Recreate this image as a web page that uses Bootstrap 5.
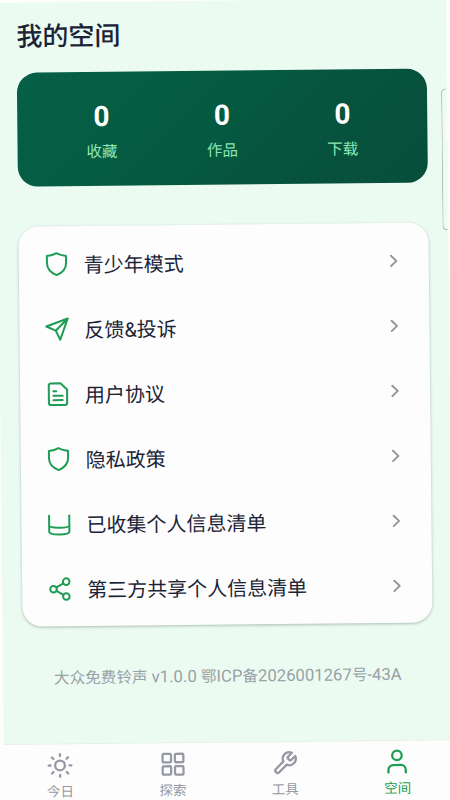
<!DOCTYPE html>
<html lang="zh-CN">
<head>
<meta charset="utf-8">
<meta name="viewport" content="width=device-width, initial-scale=1">
<title>我的空间</title>
<link rel="stylesheet" href="https://cdn.jsdelivr.net/npm/bootstrap@5.3.0/dist/css/bootstrap.min.css">
<style>
html, body { height: 100%; overflow: hidden; background: #fdfdfd; }
body { font-family: Roboto, "Noto Sans CJK SC", sans-serif; color: #1b2436; }
/* Whole screen sits slightly tilted */
.screen { width: 449.5px; height: 797px; margin: 3px 0 0 -4px; background: #ecfbf2; transform: rotate(-.6deg); transform-origin: 4px -3px; }
.screen-main { height: 740.7px; padding: 13.5px 19.6px 0; }
.page-title { font-size: 26px; line-height: 40px; font-weight: 500; margin: 0 0 16.3px .5px; color: #1b2436; }
.stats { height: 114.3px; border-radius: 20px; padding: 28.5px 24.5px 0; background: linear-gradient(135deg, #066046, #045a40 50%, #07543e 62%, #064e3b); }
.stat-num { font-size: 28px; line-height: 34px; font-weight: 700; color: #fff; }
.stat-label { font-size: 15.5px; line-height: 22px; margin-top: 6.5px; color: #8be8b4; }
.menu { margin-top: 39.8px; height: 400px; border-radius: 20px; padding: 5px 0; background: #fdfdfd; box-shadow: 0 1px 3px rgba(30,60,45,.32); }
.menu-item { height: 65px; padding: 0 27px 0 25.5px; font-size: 20px; color: #1b2436; text-decoration: none; }
.menu-item span { padding-top: 3px; }
.glyph { fill: none; stroke: currentColor; stroke-width: 1.9; stroke-linecap: round; stroke-linejoin: round; flex: none; display: block; }
.lead-glyph { width: 25.5px; height: 25.5px; margin-right: 14.3px; color: #1f9d55; }
.chev { width: 16px; height: 16px; color: #92959d; margin-top: 1.5px; }
.version { font-size: 15.6px; line-height: 24px; margin-top: 40.5px; color: #98a1a6; white-space: nowrap; }
.version span { font-size: 16.7px; }
.tabs { height: 56.3px; background: #fdfdfd; border-top: 1px solid #e3f1e8; }
.tab { padding-top: 8px; font-size: 13.5px; line-height: 16px; color: #9699a3; text-decoration: none; }
.tab .glyph { width: 26px; height: 26px; stroke-width: 2.1; margin-bottom: 5.5px; }
.tab.current { color: #1f9d55; }
.edge-handle { left: 444.2px; top: 90.2px; width: 12px; height: 142px; border: 1px solid #a5afaa; border-right: 0; border-radius: 5px 0 0 5px; background: linear-gradient(90deg, #eefaf3 0 4px, #fdfdfd 4px); clip-path: inset(0 7px 0 0); }
</style>
</head>
<body>
<div class="screen position-relative">
  <main class="screen-main">
    <h1 class="page-title">我的空间</h1>
    <section class="stats d-flex text-center">
      <div class="flex-fill w-100"><div class="stat-num">0</div><div class="stat-label">收藏</div></div>
      <div class="flex-fill w-100"><div class="stat-num">0</div><div class="stat-label">作品</div></div>
      <div class="flex-fill w-100"><div class="stat-num">0</div><div class="stat-label">下载</div></div>
    </section>
    <nav class="menu d-flex flex-column">
      <a class="menu-item d-flex align-items-center" href="#"><svg class="glyph lead-glyph" viewBox="0 0 24 24"><path d="M12 1.700C9.500 3.200 6.500 4 3 4.300V11c0 5 3.500 8.900 9 11.300 5.500-2.400 9-6.300 9-11.300V4.300C17.500 4 14.500 3.200 12 1.700z"/></svg><span>青少年模式</span><svg class="glyph chev ms-auto" viewBox="0 0 16 16"><path d="M5.200 2.800 10.600 8l-5.400 5.200"/></svg></a>
      <a class="menu-item d-flex align-items-center" href="#"><svg class="glyph lead-glyph" viewBox="0 0 24 24"><path d="M22 2 1.800 9.400l8.800 4L14.800 22zM22 2 10.600 13.400"/></svg><span>反馈&amp;投诉</span><svg class="glyph chev ms-auto" viewBox="0 0 16 16"><path d="M5.200 2.800 10.600 8l-5.400 5.200"/></svg></a>
      <a class="menu-item d-flex align-items-center" href="#"><svg class="glyph lead-glyph" viewBox="0 0 24 24"><path d="M5.500 1.800h9L20.700 7.800v12.400a2 2 0 0 1-2 2H5.500a2 2 0 0 1-2-2V3.800a2 2 0 0 1 2-2zM7.800 9.300h2.700M7.800 13.500h8.700M7.800 17.600h8.700"/></svg><span>用户协议</span><svg class="glyph chev ms-auto" viewBox="0 0 16 16"><path d="M5.200 2.800 10.600 8l-5.400 5.200"/></svg></a>
      <a class="menu-item d-flex align-items-center" href="#"><svg class="glyph lead-glyph" viewBox="0 0 24 24"><path d="M12 1.700C9.500 3.200 6.500 4 3 4.300V11c0 5 3.500 8.900 9 11.300 5.500-2.400 9-6.300 9-11.300V4.300C17.500 4 14.500 3.200 12 1.700z"/></svg><span>隐私政策</span><svg class="glyph chev ms-auto" viewBox="0 0 16 16"><path d="M5.200 2.800 10.600 8l-5.400 5.200"/></svg></a>
      <a class="menu-item d-flex align-items-center" href="#"><svg class="glyph lead-glyph" viewBox="0 0 24 24"><path d="M2.500 4v15c0 3.600 19 3.600 19 0V4M2.500 13c0 3.200 19 3.200 19 0"/></svg><span>已收集个人信息清单</span><svg class="glyph chev ms-auto" viewBox="0 0 16 16"><path d="M5.200 2.800 10.600 8l-5.400 5.200"/></svg></a>
      <a class="menu-item d-flex align-items-center" href="#"><svg class="glyph lead-glyph" viewBox="0 0 24 24"><circle cx="18" cy="5" r="3.100"/><circle cx="6" cy="12" r="3.100"/><circle cx="18" cy="19" r="3.100"/><path d="m8.700 13.600 6.600 3.800M15.300 6.600l-6.600 3.800"/></svg><span>第三方共享个人信息清单</span><svg class="glyph chev ms-auto" viewBox="0 0 16 16"><path d="M5.200 2.800 10.600 8l-5.400 5.200"/></svg></a>
    </nav>
    <p class="version text-center mb-0">大众免费铃声<span> v1.0.0 </span>鄂<span>ICP</span>备<span>2026001267</span>号<span>-43A</span></p>
  </main>
  <nav class="tabs d-flex">
    <a class="tab w-100 d-flex flex-column align-items-center" href="#"><svg class="glyph" viewBox="0 0 24 24"><circle cx="12" cy="12" r="4.500"/><path d="M12 1.500v1.800M12 20.700v1.800M1.500 12h1.800M20.700 12h1.800M4.600 4.600l1.300 1.300M18.100 18.100l1.300 1.300M4.600 19.400l1.300-1.300M18.100 5.900l1.300-1.300"/></svg>今日</a>
    <a class="tab w-100 d-flex flex-column align-items-center" href="#"><svg class="glyph" viewBox="0 0 24 24"><rect x="2.400" y="2.400" width="7.800" height="7.800" rx="1"/><rect x="13.800" y="2.400" width="7.800" height="7.800" rx="1"/><rect x="2.400" y="13.800" width="7.800" height="7.800" rx="1"/><rect x="13.800" y="13.800" width="7.800" height="7.800" rx="1"/></svg>探索</a>
    <a class="tab w-100 d-flex flex-column align-items-center" href="#"><svg class="glyph" viewBox="0 0 24 24"><path d="M14.700 6.300a1 1 0 0 0 0 1.400l1.600 1.600a1 1 0 0 0 1.400 0l3.770-3.770a6 6 0 0 1-7.940 7.940l-6.910 6.910a2.120 2.120 0 0 1-3-3l6.910-6.910a6 6 0 0 1 7.940-7.940l-3.760 3.760z"/></svg>工具</a>
    <a class="tab current w-100 d-flex flex-column align-items-center" href="#"><svg class="glyph" viewBox="0 0 24 24"><circle cx="12" cy="6" r="4.400"/><path d="M4 21.800v-2.500a4.400 4.400 0 0 1 4.400-4.400h7.200a4.400 4.400 0 0 1 4.400 4.400v2.500"/></svg>空间</a>
  </nav>
  <div class="edge-handle position-absolute"></div>
</div>
<script src="https://cdn.jsdelivr.net/npm/bootstrap@5.3.0/dist/js/bootstrap.bundle.min.js"></script>
</body>
</html>
